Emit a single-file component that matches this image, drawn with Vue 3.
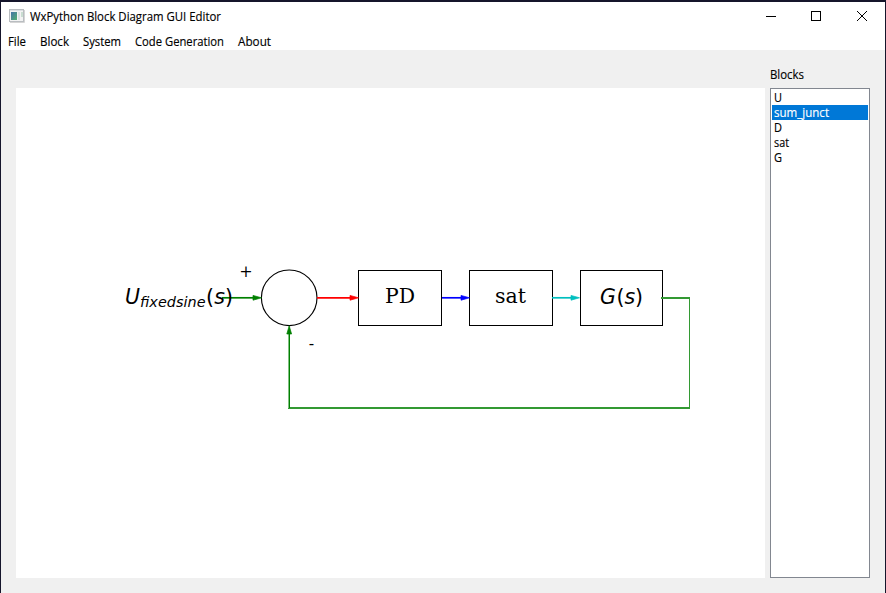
<script setup>
const menus = [
  { label: 'File', width: 18 },
  { label: 'Block', width: 29 },
  { label: 'System', width: 38 },
  { label: 'Code Generation', width: 89 },
  { label: 'About', width: 33 },
]
const blocks = [
  { name: 'U', width: 8 },
  { name: 'sum_junct', width: 55, selected: true },
  { name: 'D', width: 8 },
  { name: 'sat', width: 15 },
  { name: 'G', width: 8 },
]
const boxes = [
  { x: 358.5, w: 83 },
  { x: 469.5, w: 83 },
  { x: 580.5, w: 82 },
]
const arrows = [
  { from: 222, to: 262, color: '#008000' },
  { from: 317, to: 359, color: '#ff0000' },
  { from: 442, to: 470, color: '#0000ff' },
  { from: 552, to: 580, color: '#00bfbf' },
]
</script>

<template>
  <div class="window">
    <header class="titlebar">
      <svg class="app-icon" width="16" height="14" viewBox="0 0 16 14">
        <defs>
          <linearGradient id="pane" x1="0" y1="0" x2="1" y2="1">
            <stop offset="0" stop-color="#4674a8" />
            <stop offset="1" stop-color="#55b070" />
          </linearGradient>
        </defs>
        <rect x="0.5" y="0.5" width="14" height="12" fill="#f3f3f3" stroke="#b9bdc1" />
        <rect x="1" y="1" width="13" height="1" fill="#dcdfe2" />
        <rect x="2" y="3" width="6" height="8" fill="url(#pane)" />
        <rect x="9" y="3" width="2" height="8" fill="#dde3e3" />
        <rect x="12" y="3" width="2" height="5" fill="#c9ddd1" />
        <path d="M1 13.5H15.5V1" fill="none" stroke="#d5d5d5" />
      </svg>
      <svg class="title ui" width="196" height="18">
        <text x="0" y="13" textLength="191" lengthAdjust="spacingAndGlyphs">WxPython Block Diagram GUI Editor</text>
      </svg>
      <svg class="controls" width="104" height="12" viewBox="0 0 104 12" shape-rendering="crispEdges">
        <path d="M1 5.5H11" />
        <rect x="46.5" y="0.5" width="9" height="9" />
        <path d="M92 0L102 10M102 0L92 10" shape-rendering="auto" />
      </svg>
    </header>
    <nav class="menubar">
      <svg v-for="m in menus" :key="m.label" class="menu ui" :width="m.width" height="18">
        <text x="0" y="13" :textLength="m.width" lengthAdjust="spacingAndGlyphs">{{ m.label }}</text>
      </svg>
    </nav>
    <main class="content">
      <svg class="canvas" width="749" height="490" viewBox="16 88 749 490">
        <g fill="none" stroke="#000" stroke-width="1">
          <circle cx="289.2" cy="297.8" r="27.8" stroke-width="1.15" />
          <rect v-for="b in boxes" :key="b.x" :x="b.x" y="270.5" :width="b.w" height="55" />
        </g>
        <g v-for="a in arrows" :key="a.from" :fill="a.color" :stroke="a.color">
          <path :d="`M${a.from} 297.8H${a.to - 8}`" stroke-width="1.7" />
          <path :d="`M${a.to - 9} 295.4L${a.to - 0.5} 297.8L${a.to - 9} 300.2Z`" stroke-width="0.7" />
        </g>
        <g fill="#339933">
          <rect x="661" y="297" width="29" height="2" />
          <rect x="689" y="297" width="1" height="112" />
          <rect x="288" y="407" width="402" height="2" />
        </g>
        <rect x="288" y="333" width="1" height="75" fill="#80c080" />
        <rect x="289" y="333" width="1" height="75" fill="#008000" />
        <path d="M286.8 334L289.2 325.8L291.6 334Z" fill="#008000" stroke="#008000" stroke-width="0.7" />
        <g class="math">
          <text x="125" y="304" font-size="20.5" textLength="14.5">U</text>
          <text x="140" y="307" font-size="14.4" textLength="65.5">fixedsine</text>
          <text class="upright" x="206" y="304" font-size="20.5">(</text>
          <text x="214.3" y="304" font-size="20.5">s</text>
          <text class="upright" x="225" y="304" font-size="20.5">)</text>
          <text x="600" y="304" font-size="20.5">G</text>
          <text class="upright" x="616.5" y="304" font-size="20.5">(</text>
          <text x="624.5" y="304" font-size="20.5">s</text>
          <text class="upright" x="635" y="304" font-size="20.5">)</text>
        </g>
        <g class="serif">
          <text x="385" y="303" textLength="30" lengthAdjust="spacingAndGlyphs">PD</text>
          <text x="495" y="303" textLength="31" lengthAdjust="spacingAndGlyphs">sat</text>
          <text class="sign" x="239.3" y="277">+</text>
          <text class="sign" x="308.7" y="349">-</text>
        </g>
      </svg>
      <aside class="side">
        <svg class="label ui" width="36" height="18">
          <text x="0" y="13" textLength="34" lengthAdjust="spacingAndGlyphs">Blocks</text>
        </svg>
        <ul class="list">
          <li v-for="b in blocks" :key="b.name" :class="{ selected: b.selected }">
            <svg class="ui" width="90" height="15">
              <text x="0" y="12" :textLength="b.width" lengthAdjust="spacingAndGlyphs">{{ b.name }}</text>
            </svg>
          </li>
        </ul>
      </aside>
    </main>
  </div>
</template>

<style>
body {
  margin: 0;
  overflow: hidden;
}
</style>

<style scoped>
.window {
  box-sizing: border-box;
  width: 886px;
  height: 593px;
  display: flex;
  flex-direction: column;
  background: #f0f0f0;
  border: 1px solid #15152b;
  border-top-width: 2px;
  border-bottom: 0;
  font-family: "Open Sans", "Noto Sans", sans-serif;
  font-size: 12px;
}
svg {
  display: block;
}
.ui {
  overflow: visible;
  stroke: #000;
  stroke-width: 0.15px;
}
.titlebar {
  display: flex;
  height: 30px;
  background: #fff;
}
.app-icon {
  margin: 7px 5px 0 8px;
}
.title {
  margin-top: 6px;
}
.controls {
  margin: 9px 16px 0 auto;
  fill: none;
  stroke: #000;
  stroke-width: 1;
}
.menubar {
  display: flex;
  gap: 14px;
  height: 18px;
  padding-left: 7px;
  background: #fff;
}
.menu {
  margin-top: 1px;
}
.content {
  display: flex;
  gap: 5px;
  padding-left: 15px;
}
.canvas {
  margin-top: 38px;
  background: #fff;
}
.side {
  width: 100px;
  padding-top: 16px;
}
.label {
  margin-bottom: 4px;
}
.list {
  box-sizing: border-box;
  height: 490px;
  margin: 0;
  padding: 1px;
  border: 1px solid #828790;
  background: #fff;
  list-style: none;
}
.list li {
  height: 15px;
  padding-left: 2px;
}
.list .selected {
  background: #0078d7;
  fill: #fff;
}
.list .selected .ui {
  stroke: #fff;
}
.math {
  font-family: "DejaVu Sans", sans-serif;
  font-style: oblique;
}
.upright {
  font-style: normal;
}
.serif {
  font-family: "DejaVu Serif", serif;
  font-size: 20px;
}
.sign {
  font-size: 16px;
}
</style>
